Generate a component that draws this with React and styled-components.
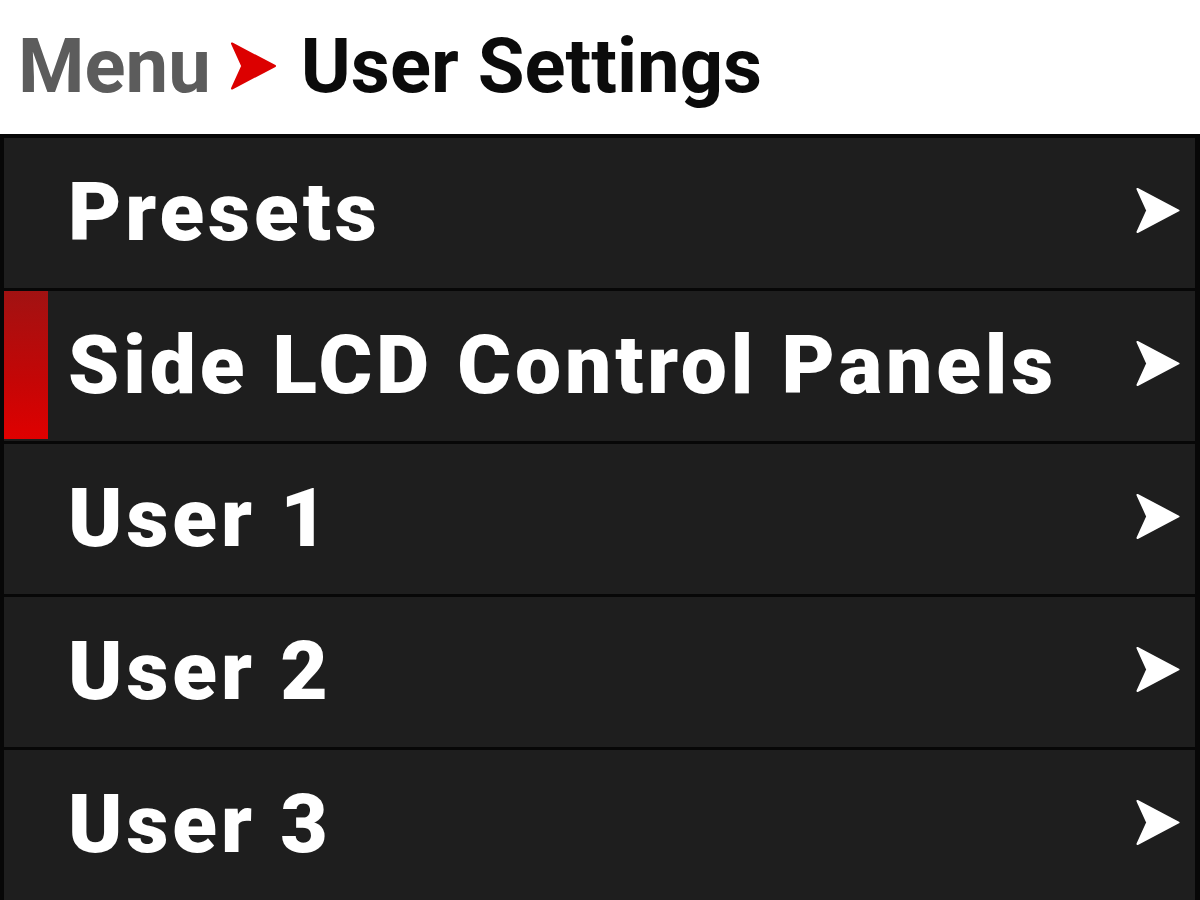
import React from "react";
import styled, { createGlobalStyle } from "styled-components";

const GlobalStyle = createGlobalStyle`
  html, body {
    margin: 0;
    padding: 0;
    background: #ffffff;
  }
  body {
    font-family: Roboto, "Liberation Sans", sans-serif;
  }
`;

const Screen = styled.div`
  width: 1200px;
  height: 900px;
  display: flex;
  flex-direction: column;
  overflow: hidden;
  background: #ffffff;
`;

const Header = styled.header`
  height: 134px;
  display: flex;
  align-items: center;
  padding-left: 18px;
  font-weight: 700;
  font-size: 76px;
  box-sizing: border-box;
  padding-bottom: 2px;
`;

const Crumb = styled.span`
  color: ${(p) => (p.current ? "#0b0b0b" : "#5c5c5c")};
  line-height: 1;
`;

const Sep = styled.span`
  display: flex;
  margin: 0 25px 0 20px;
`;

const List = styled.div`
  flex: 1;
  display: flex;
  flex-direction: column;
  gap: 3px;
  background: #070707;
  padding: 4px 5px 0 4px;
`;

const Row = styled.div`
  height: 150px;
  flex-shrink: 0;
  display: flex;
  align-items: center;
  background: #1e1e1e;
  position: relative;
  padding: 0 15px 0 64px;
`;

const Marker = styled.div`
  position: absolute;
  left: 0;
  top: 0;
  bottom: 2px;
  width: 44px;
  background: linear-gradient(180deg, #a11212 0%, #c40606 60%, #df0000 100%);
`;

const Label = styled.span`
  flex: 1;
  color: #ffffff;
  font-weight: 900;
  font-size: 82px;
  line-height: 1;
  letter-spacing: 3.9px;
  padding-bottom: 2px;
`;

const Arrow = ({ color, width, height }) => (
  <svg width={width} height={height} viewBox="0 0 44 46" style={{ display: "block" }}>
    <polygon
      points="1,1 43,23 1,45 11,23"
      fill={color}
      stroke={color}
      strokeWidth="2"
      strokeLinejoin="round"
    />
  </svg>
);

const ArrowSlot = styled.span`
  display: flex;
  margin-bottom: 6px;
`;

const items = [
  "Presets",
  "Side LCD Control Panels",
  "User 1",
  "User 2",
  "User 3",
];

export default function App() {
  return (
    <Screen>
      <GlobalStyle />
      <Header>
        <Crumb>Menu</Crumb>
        <Sep>
          <Arrow color="#dc0000" width={45} height={48} />
        </Sep>
        <Crumb current>User Settings</Crumb>
      </Header>
      <List>
        {items.map((label, i) => (
          <Row key={label}>
            {i === 1 && <Marker />}
            <Label>{label}</Label>
            <ArrowSlot>
              <Arrow color="#ffffff" width={44} height={45} />
            </ArrowSlot>
          </Row>
        ))}
      </List>
    </Screen>
  );
}
